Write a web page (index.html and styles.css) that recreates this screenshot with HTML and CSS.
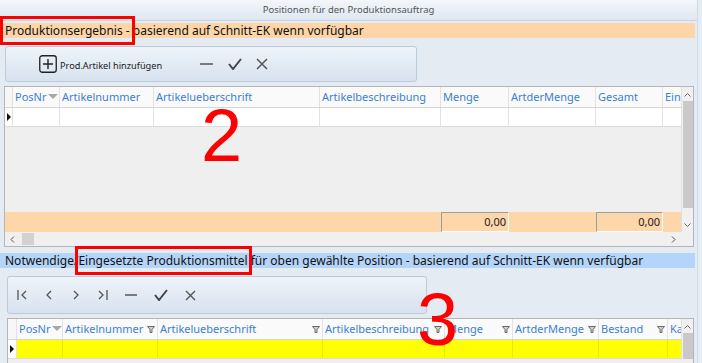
FILE: index.html
```html
<!DOCTYPE html>
<html lang="de">
<head>
  <meta charset="UTF-8" />
  <title>Positionen für den Produktionsauftrag</title>
  <link rel="stylesheet" href="styles.css">
</head>
<body>
  <div class="fenster">
    <div class="caption">Positionen für den Produktionsauftrag</div>

    <div class="band orange"><span class="markiert m1">Produktionsergebnis -</span> basierend auf Schnitt-EK wenn vorfügbar</div>

    <div class="toolbar tb1">
      <span class="icon plus">
        <svg width="18" height="18" viewBox="0 0 18 18"><rect x="0.75" y="0.75" width="16.5" height="16.5" rx="2.5" fill="none" stroke="#222" stroke-width="1.3"/><path d="M9 4v10M4 9h10" stroke="#222" stroke-width="1.4"/></svg>
      </span>
      <span class="tb-text">Prod.Artikel hinzufügen</span>
      <span class="icon minus"><svg width="13" height="12" viewBox="0 0 13 12"><path d="M0 6h13" stroke="#555" stroke-width="1.5"/></svg></span>
      <span class="icon"><svg width="14" height="12" viewBox="0 0 14 12"><path d="M1 6l4 5 8-10" fill="none" stroke="#444" stroke-width="2"/></svg></span>
      <span class="icon"><svg width="12" height="12" viewBox="0 0 12 12"><path d="M1 1l10 10M11 1L1 11" stroke="#555" stroke-width="1.5"/></svg></span>
    </div>

    <div class="grid g1">
      <div class="grid-main">
        <div class="cols">
          <div class="zeile kopf">
            <div class="ind"></div>
            <div class="zelle">PosNr<span class="sort"></span></div>
            <div class="zelle">Artikelnummer</div>
            <div class="zelle">Artikelueberschrift</div>
            <div class="zelle">Artikelbeschreibung</div>
            <div class="zelle">Menge</div>
            <div class="zelle">ArtderMenge</div>
            <div class="zelle">Gesamt</div>
            <div class="zelle clip">Ein:</div>
          </div>
          <div class="zeile daten">
            <div class="ind"><span class="pfeil"></span></div>
            <div class="zelle"></div><div class="zelle"></div><div class="zelle"></div><div class="zelle"></div>
            <div class="zelle"></div><div class="zelle"></div><div class="zelle"></div><div class="zelle"></div>
          </div>
          <div class="leer"></div>
          <div class="zeile summe">
            <div></div><div></div><div></div><div></div><div></div>
            <div class="box">0,00</div>
            <div></div>
            <div class="box">0,00</div>
            <div></div>
          </div>
        </div>
        <div class="vscroll">
          <span class="pf"><svg width="7" height="5" viewBox="0 0 7 5"><path d="M0.5 4.5l3-3 3 3" fill="none" stroke="#666"/></svg></span>
          <span class="thumb"></span>
          <span class="pf"><svg width="7" height="5" viewBox="0 0 7 5"><path d="M0.5 0.5l3 3 3-3" fill="none" stroke="#666"/></svg></span>
        </div>
      </div>
      <div class="hscroll">
        <span class="pf"><svg width="5" height="7" viewBox="0 0 5 7"><path d="M4 0.5l-3 3 3 3" fill="none" stroke="#555"/></svg></span>
        <span class="hthumb"></span>
        <span class="spacer"></span>
        <span class="pf"><svg width="5" height="7" viewBox="0 0 5 7"><path d="M1 0.5l3 3-3 3" fill="none" stroke="#555"/></svg></span>
      </div>
      <div class="nummer n2">2</div>
    </div>

    <div class="band blau">Notwendige/<span class="markiert m2">Eingesetzte Produktionsmittel</span> für oben gewählte Position - basierend auf Schnitt-EK wenn verfügbar</div>

    <div class="toolbar tb2">
      <span class="icon"><svg width="10" height="10" viewBox="0 0 10 10"><path d="M1 0v10M9 1L5 5l4 4" fill="none" stroke="#555" stroke-width="1.3"/></svg></span>
      <span class="icon"><svg width="10" height="10" viewBox="0 0 10 10"><path d="M7 1L3 5l4 4" fill="none" stroke="#555" stroke-width="1.3"/></svg></span>
      <span class="icon"><svg width="10" height="10" viewBox="0 0 10 10"><path d="M3 1l4 4-4 4" fill="none" stroke="#555" stroke-width="1.3"/></svg></span>
      <span class="icon"><svg width="10" height="10" viewBox="0 0 10 10"><path d="M1 1l4 4-4 4M9 0v10" fill="none" stroke="#555" stroke-width="1.3"/></svg></span>
      <span class="icon"><svg width="12" height="10" viewBox="0 0 12 10"><path d="M0 5h12" stroke="#555" stroke-width="1.5"/></svg></span>
      <span class="icon"><svg width="14" height="12" viewBox="0 0 14 12"><path d="M1 6l4 5 8-10" fill="none" stroke="#444" stroke-width="2"/></svg></span>
      <span class="icon"><svg width="11" height="11" viewBox="0 0 11 11"><path d="M1 1l9 9M10 1L1 10" stroke="#555" stroke-width="1.4"/></svg></span>
    </div>

    <div class="grid g2">
      <div class="grid-main">
        <div class="cols">
          <div class="zeile kopf">
            <div class="ind"></div>
            <div class="zelle">PosNr<span class="sort"></span></div>
            <div class="zelle">Artikelnummer<svg class="filter" width="8" height="7" viewBox="0 0 8 7"><path d="M0.5 0.5h7L5 3.5V6.5H3V3.5z" fill="#cfcfcf" stroke="#6a6a6a"/></svg></div>
            <div class="zelle">Artikelueberschrift<svg class="filter" width="8" height="7" viewBox="0 0 8 7"><path d="M0.5 0.5h7L5 3.5V6.5H3V3.5z" fill="#cfcfcf" stroke="#6a6a6a"/></svg></div>
            <div class="zelle">Artikelbeschreibung<svg class="filter" width="8" height="7" viewBox="0 0 8 7"><path d="M0.5 0.5h7L5 3.5V6.5H3V3.5z" fill="#cfcfcf" stroke="#6a6a6a"/></svg></div>
            <div class="zelle">Menge<svg class="filter" width="8" height="7" viewBox="0 0 8 7"><path d="M0.5 0.5h7L5 3.5V6.5H3V3.5z" fill="#cfcfcf" stroke="#6a6a6a"/></svg></div>
            <div class="zelle">ArtderMenge<svg class="filter" width="8" height="7" viewBox="0 0 8 7"><path d="M0.5 0.5h7L5 3.5V6.5H3V3.5z" fill="#cfcfcf" stroke="#6a6a6a"/></svg></div>
            <div class="zelle">Bestand<svg class="filter" width="8" height="7" viewBox="0 0 8 7"><path d="M0.5 0.5h7L5 3.5V6.5H3V3.5z" fill="#cfcfcf" stroke="#6a6a6a"/></svg></div>
            <div class="zelle clip">Ka</div>
          </div>
          <div class="zeile daten gelb">
            <div class="ind"><span class="pfeil"></span></div>
            <div class="zelle"></div><div class="zelle"></div><div class="zelle"></div><div class="zelle"></div>
            <div class="zelle"></div><div class="zelle"></div><div class="zelle"></div><div class="zelle"></div>
          </div>
        </div>
        <div class="vscroll">
          <span class="pf"><svg width="7" height="5" viewBox="0 0 7 5"><path d="M0.5 4.5l3-3 3 3" fill="none" stroke="#666"/></svg></span>
          <span class="thumb"></span>
        </div>
      </div>
      <div class="nummer n3">3</div>
    </div>
  </div>
</body>
</html>
```

FILE: styles.css
```css
body {
  margin: 0;
  font-family: "Noto Sans", sans-serif;
  background: #e5ecf4;
  overflow: hidden;
}
.fenster {
  width: 697px;
  height: 363px;
  overflow: hidden;
  background: #e4ebf3;
  border-right: 1px solid #cfdbe8;
}
.caption {
  height: 20px;
  line-height: 20px;
  text-align: center;
  font-size: 9.5px;
  color: #555;
  background: linear-gradient(#f3f6fa, #dfe7f1);
  border-bottom: 1px solid #c6d4e4;
}
.band {
  height: 15px;
  line-height: 15px;
  font-size: 12px;
  color: #111;
  padding-left: 5px;
  margin-right: 2px;
  white-space: nowrap;
}
.orange {
  margin-top: 2px;
  background: #fdd5a6;
}
.blau {
  margin-top: 6px;
  background: #b3d5f9;
}
.markiert {
  position: relative;
}
.markiert::after {
  content: "";
  position: absolute;
  border: 3px solid #f00;
}
.m1::after {
  left: -5px;
  right: -5px;
  top: -6px;
  bottom: -6px;
}
.m2::after {
  left: -3px;
  right: -4px;
  top: -6px;
  bottom: -6px;
}
.toolbar {
  display: flex;
  align-items: center;
  background: linear-gradient(#eef3f9, #d7e2ef);
  border: 1px solid #bccbdc;
  border-radius: 3px;
  box-sizing: border-box;
}
.tb1 {
  margin: 8px 0 0 5px;
  width: 412px;
  height: 36px;
  padding-left: 33px;
}
.tb1 .tb-text {
  font-size: 9.2px;
  color: #222;
  margin: 2px 38px 0 3px;
}
.tb1 .icon {
  display: flex;
}
.tb1 .minus {
  margin-right: 15px;
}
.tb1 .icon + .icon {
  margin-right: 14px;
}
.tb2 {
  margin: 8px 0 0 7px;
  width: 420px;
  height: 38px;
  padding-left: 9px;
  gap: 17px;
}
.tb2 .icon {
  display: flex;
}
.grid {
  position: relative;
  background: #efefef;
  border: 1px solid #b5b5b5;
  margin-right: 3px;
}
.g1 {
  margin-top: 4px;
  margin-left: 4px;
}
.g2 {
  margin-top: 4px;
  margin-left: 7px;
  height: 60px;
}
.grid-main {
  display: flex;
}
.cols {
  flex: 1;
  overflow: hidden;
}
.zeile {
  display: grid;
}
.g1 .zeile {
  grid-template-columns: 8px 47px 94px 166px 121px 68px 87px 67px 19px;
}
.g2 .zeile {
  grid-template-columns: 9px 46px 95px 165px 122px 68px 86px 69px 14px;
}
.kopf {
  height: 20px;
  background: #fafafa;
  border-bottom: 1px solid #d6d6d6;
}
.kopf .zelle {
  position: relative;
  font-size: 11px;
  line-height: 20px;
  color: #3b7fd3;
  padding-left: 2px;
  border-right: 1px solid #e2e2e2;
  white-space: nowrap;
  overflow: hidden;
}
.zelle.clip {
  border-right: none;
}
.daten {
  height: 18px;
  background: #fff;
  border-bottom: 1px solid #dcdcdc;
}
.daten .zelle {
  border-right: 1px solid #e2e2e2;
}
.daten.gelb {
  background: #ffff00;
}
.daten.gelb .zelle {
  border-right-color: #e8e800;
}
.ind {
  display: flex;
  align-items: center;
  justify-content: center;
  background: #fff;
  border-right: 1px solid #e2e2e2;
}
.kopf .ind {
  background: #f7f7f7;
}
.pfeil {
  width: 0;
  height: 0;
  border-top: 4px solid transparent;
  border-bottom: 4px solid transparent;
  border-left: 4px solid #111;
}
.sort {
  display: inline-block;
  width: 0;
  height: 0;
  margin-left: 2px;
  vertical-align: 2px;
  border-left: 5px solid transparent;
  border-right: 5px solid transparent;
  border-top: 5px solid #a8a8a8;
}
.filter {
  position: absolute;
  right: 2px;
  top: 7px;
  background: #fafafa;
}
.leer {
  height: 85px;
}
.summe {
  height: 20px;
  background: #fdd6a9;
}
.box {
  font-size: 11px;
  line-height: 17px;
  text-align: right;
  padding-right: 2px;
  color: #222;
  border: 1px solid #9d9d9d;
  border-right-color: #fff;
  border-bottom-color: #fff;
}
.vscroll {
  width: 11px;
  display: flex;
  flex-direction: column;
  align-items: center;
  background: #f0f0f0;
  border-left: 1px solid #e0e0e0;
}
.vscroll .pf {
  display: flex;
  align-items: center;
  height: 14px;
}
.thumb {
  flex: 1;
  width: 10px;
  background: #c9c9c9;
}
.g1 .thumb {
  margin-bottom: 10px;
}
.hscroll {
  display: flex;
  align-items: center;
  height: 14px;
  background: #f0f0f0;
  padding: 0 17px 0 5px;
}
.hscroll .pf {
  display: flex;
}
.hthumb {
  width: 12px;
  height: 12px;
  margin-left: 7px;
  background: #d2d2d2;
}
.spacer {
  flex: 1;
}
.nummer {
  position: absolute;
  font-family: "Liberation Sans", Arial, sans-serif;
  font-size: 74px;
  line-height: 1;
  color: #f00;
}
.n2 {
  left: 196px;
  top: 12px;
}
.n3 {
  left: 409px;
  top: -36px;
}
```
